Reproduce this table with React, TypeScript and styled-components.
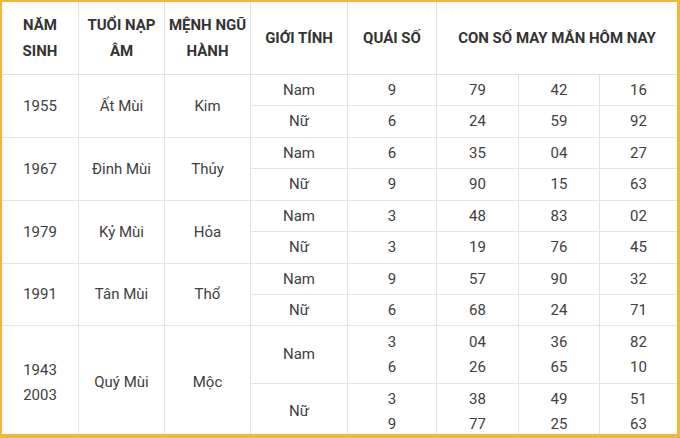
import styled, { createGlobalStyle } from "styled-components";

const GlobalStyle = createGlobalStyle`
  html, body {
    margin: 0;
    padding: 0;
    background: #ffffff;
  }
  body {
    font-family: Roboto, "Liberation Sans", Arial, sans-serif;
  }
`;

type Row = {
  gender: string;
  quai: string[];
  nums: string[][];
  height: number;
};

type Group = {
  years: string[];
  tuoi: string;
  menh: string;
  rows: Row[];
};

const groups: Group[] = [
  {
    years: ["1955"],
    tuoi: "Ất Mùi",
    menh: "Kim",
    rows: [
      { gender: "Nam", quai: ["9"], nums: [["79"], ["42"], ["16"]], height: 31 },
      { gender: "Nữ", quai: ["6"], nums: [["24"], ["59"], ["92"]], height: 32 },
    ],
  },
  {
    years: ["1967"],
    tuoi: "Đinh Mùi",
    menh: "Thủy",
    rows: [
      { gender: "Nam", quai: ["6"], nums: [["35"], ["04"], ["27"]], height: 31 },
      { gender: "Nữ", quai: ["9"], nums: [["90"], ["15"], ["63"]], height: 32 },
    ],
  },
  {
    years: ["1979"],
    tuoi: "Kỷ Mùi",
    menh: "Hỏa",
    rows: [
      { gender: "Nam", quai: ["3"], nums: [["48"], ["83"], ["02"]], height: 31 },
      { gender: "Nữ", quai: ["3"], nums: [["19"], ["76"], ["45"]], height: 32 },
    ],
  },
  {
    years: ["1991"],
    tuoi: "Tân Mùi",
    menh: "Thổ",
    rows: [
      { gender: "Nam", quai: ["9"], nums: [["57"], ["90"], ["32"]], height: 31 },
      { gender: "Nữ", quai: ["6"], nums: [["68"], ["24"], ["71"]], height: 31 },
    ],
  },
  {
    years: ["1943", "2003"],
    tuoi: "Quý Mùi",
    menh: "Mộc",
    rows: [
      {
        gender: "Nam",
        quai: ["3", "6"],
        nums: [["04", "26"], ["36", "65"], ["82", "10"]],
        height: 58,
      },
      {
        gender: "Nữ",
        quai: ["3", "9"],
        nums: [["38", "77"], ["49", "25"], ["51", "63"]],
        height: 56,
      },
    ],
  },
];

const colWidths = [77, 86, 86, 97, 89, 82, 81, 77];

function Lines({ items }: { items: string[] }) {
  return (
    <>
      {items.map((t, i) => (
        <Line key={i}>{t}</Line>
      ))}
    </>
  );
}

export default function App() {
  return (
    <>
      <GlobalStyle />
      <Frame>
        <Table>
          <colgroup>
            {colWidths.map((w, i) => (
              <col key={i} style={{ width: w }} />
            ))}
          </colgroup>
          <thead>
            <tr style={{ height: 73 }}>
              <Th>
                <Line>NĂM</Line>
                <Line>SINH</Line>
              </Th>
              <Th>
                <Line>TUỔI NẠP</Line>
                <Line>ÂM</Line>
              </Th>
              <Th>
                <Line>MỆNH NGŨ</Line>
                <Line>HÀNH</Line>
              </Th>
              <Th>GIỚI TÍNH</Th>
              <Th>QUÁI SỐ</Th>
              <Th colSpan={3} $last>
                CON SỐ MAY MẮN HÔM NAY
              </Th>
            </tr>
          </thead>
          <tbody>
            {groups.map((g) =>
              g.rows.map((r, ri) => (
                <tr key={g.tuoi + ri} style={{ height: r.height }}>
                  {ri === 0 && (
                    <>
                      <Td rowSpan={g.rows.length}>
                        <Lines items={g.years} />
                      </Td>
                      <Td rowSpan={g.rows.length}>{g.tuoi}</Td>
                      <Td rowSpan={g.rows.length}>{g.menh}</Td>
                    </>
                  )}
                  <Td>{r.gender}</Td>
                  <Td>
                    <Lines items={r.quai} />
                  </Td>
                  {r.nums.map((n, ni) => (
                    <Td key={ni} $last={ni === 2}>
                      <Lines items={n} />
                    </Td>
                  ))}
                </tr>
              ))
            )}
          </tbody>
        </Table>
      </Frame>
    </>
  );
}

const Frame = styled.div`
  box-sizing: border-box;
  width: 680px;
  height: 438px;
  border-style: solid;
  border-color: #f3b638;
  border-width: 2px 3px 4px 2px;
  background: #ffffff;
  overflow: hidden;
`;

const Table = styled.table`
  width: 675px;
  table-layout: fixed;
  border-collapse: separate;
  border-spacing: 0;
`;

const Th = styled.th<{ $last?: boolean }>`
  padding: 0;
  text-align: center;
  vertical-align: middle;
  font-size: 15px;
  font-weight: 700;
  line-height: 26px;
  color: #333333;
  border-bottom: 1px solid #e2e0e4;
  border-right: ${(p) => (p.$last ? "none" : "1px solid #e2e0e4")};
`;

const Td = styled.td<{ $last?: boolean }>`
  padding: 0;
  text-align: center;
  vertical-align: middle;
  font-size: 15px;
  line-height: 25px;
  color: #404040;
  border-bottom: 1px solid #e6e4e8;
  border-right: ${(p) => (p.$last ? "none" : "1px solid #e2e0e4")};
`;

const Line = styled.div`
  display: block;
`;
